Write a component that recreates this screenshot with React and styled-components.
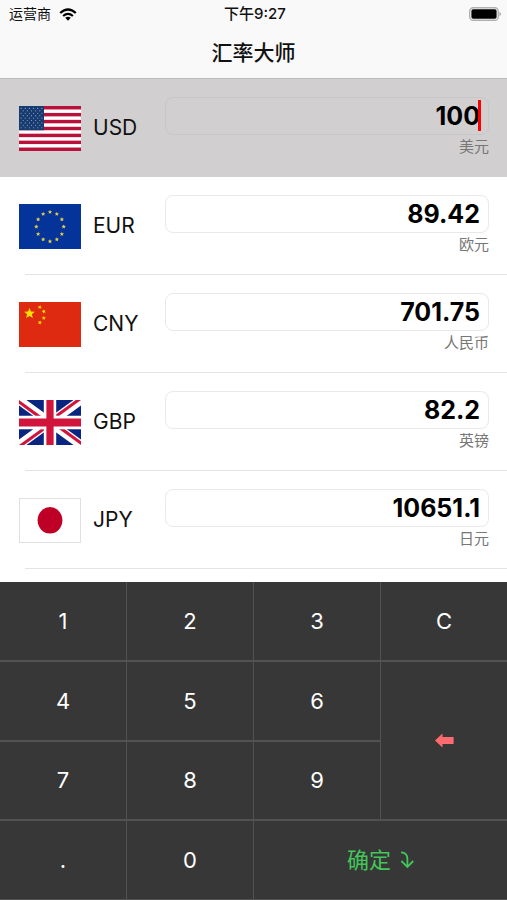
import { useState } from "react";
import styled, { createGlobalStyle } from "styled-components";

const GlobalStyle = createGlobalStyle`
  * {
    box-sizing: border-box;
  }

  body {
    margin: 0;
    background: #fff;
    color: #111;
    font-family: Inter, "Noto Sans CJK SC", sans-serif;
  }
`;

const Page = styled.div`
  min-height: 100vh;
  display: flex;
  flex-direction: column;
`;

const Header = styled.header`
  background: #f9f9f9;
  border-bottom: 1px solid #bdbcbd;
`;

const StatusBar = styled.div`
  display: grid;
  grid-template-columns: 1fr auto 1fr;
  align-items: center;
  height: 28px;
  padding: 0 6px 0 9px;
  font-size: 15px;
  line-height: 20px;
`;

const Carrier = styled.div`
  display: flex;
  align-items: center;
  gap: 8px;
  font-size: 14px;
`;

const Time = styled.div`
  font-weight: 500;
`;

const Battery = styled.svg`
  justify-self: end;
`;

const Title = styled.h1`
  margin: 0;
  height: 50px;
  font-size: 21px;
  font-weight: 500;
  line-height: 50px;
  text-align: center;
`;

const List = styled.main`
  flex: 1;
`;

const Row = styled.div`
  display: flex;
  align-items: center;
  height: 98px;
  padding: 0 18px 0 19px;
  background: ${(props) => (props.$active ? "#d1cfd0" : "#fff")};
`;

const Divider = styled.hr`
  height: 1px;
  margin: -1px 0 0 25px;
  border: 0;
  background: ${(props) => (props.$hidden ? "transparent" : "#e4e4e4")};
`;

const Flag = styled.svg`
  flex: none;
  display: block;
  width: 62px;
  height: 45px;
`;

const Code = styled.label`
  flex: none;
  width: 84px;
  padding-left: 12px;
  font-size: 21px;
  line-height: 28px;
`;

const Amount = styled.div`
  flex: 1;
  min-width: 0;
  display: flex;
  flex-direction: column;
  gap: 2px;
  padding-bottom: 2px;
`;

const Field = styled.div`
  position: relative;
`;

const AmountInput = styled.input`
  display: block;
  width: 100%;
  height: 38px;
  padding: 0 8px;
  border: 1px solid ${(props) => (props.$active ? "#c8c7c8" : "#e9e9e9")};
  border-radius: 8px;
  outline: none;
  background: transparent;
  color: #000;
  font-family: inherit;
  font-size: 25px;
  font-weight: 700;
  text-align: right;
`;

const Caret = styled.span`
  position: absolute;
  top: 3px;
  right: 8px;
  width: 3px;
  height: 31px;
  background: #f00;
`;

const CurrencyName = styled.div`
  color: #777;
  font-size: 15px;
  line-height: 20px;
  text-align: right;
`;

const Keypad = styled.div`
  display: grid;
  grid-template-columns: repeat(4, 1fr);
  grid-auto-rows: 1fr;
  gap: 2px 1px;
  height: 318px;
  border-bottom: 1px solid #525252;
  background: #525252;
`;

const Key = styled.button`
  display: flex;
  align-items: center;
  justify-content: center;
  gap: 9px;
  grid-row: span ${(props) => props.$rows || 1};
  grid-column: span ${(props) => props.$cols || 1};
  padding: 0;
  border: 0;
  background: #373737;
  color: ${(props) => props.$color || "#fff"};
  font-family: inherit;
  font-size: 22px;
  line-height: 26px;
  cursor: pointer;
`;

const starPoints = (cx, cy, r, turn = 0) =>
  Array.from({ length: 10 }, (_, i) => {
    const angle = (Math.PI * i) / 5 - Math.PI / 2 + turn;
    const radius = i % 2 ? r * 0.45 : r;
    return `${cx + radius * Math.cos(angle)},${cy + radius * Math.sin(angle)}`;
  }).join(" ");

const UsFlag = () => (
  <Flag viewBox="0 0 62 45" aria-hidden="true">
    <rect width="62" height="45" fill="#fff" />
    {[0, 2, 4, 6, 8, 10, 12].map((i) => (
      <rect key={i} y={(i * 45) / 13} width="62" height={45 / 13} fill="#b9123a" />
    ))}
    <rect width="25" height={(45 * 7) / 13} fill="#173b70" />
    {Array.from({ length: 9 }, (_, row) =>
      Array.from({ length: row % 2 ? 5 : 6 }, (_, col) => (
        <circle
          key={`${row}-${col}`}
          cx={(row % 2 ? 4.2 : 2.1) + col * 4.15}
          cy={2.4 + row * 2.42}
          r="0.6"
          fill="#8fa3c2"
        />
      ))
    )}
  </Flag>
);

const EuFlag = () => (
  <Flag viewBox="0 0 62 45" aria-hidden="true">
    <rect width="62" height="45" fill="#043399" />
    {Array.from({ length: 12 }, (_, i) => (
      <polygon
        key={i}
        fill="#e8cf45"
        points={starPoints(
          31 + 13.7 * Math.sin((i * Math.PI) / 6),
          22.7 - 14.7 * Math.cos((i * Math.PI) / 6),
          2.3
        )}
      />
    ))}
  </Flag>
);

const CnFlag = () => (
  <Flag viewBox="0 0 62 45" aria-hidden="true">
    <rect width="62" height="45" fill="#dd2a10" />
    <g fill="#ffdf00">
      <polygon points={starPoints(10.5, 11.5, 5.6)} />
      <polygon points={starPoints(20.8, 5.2, 2.2, 0.4)} />
      <polygon points={starPoints(24.8, 9.5, 2.2, 0.8)} />
      <polygon points={starPoints(24.8, 16, 2.2)} />
      <polygon points={starPoints(20.8, 20.5, 2.2, 0.4)} />
    </g>
  </Flag>
);

const GbFlag = () => (
  <Flag viewBox="0 0 60 40" preserveAspectRatio="none" aria-hidden="true">
    <rect width="60" height="40" fill="#0a2580" />
    <path d="M0 0 60 40M60 0 0 40" stroke="#fff" strokeWidth="8" />
    <g fill="#d0143c">
      <path d="M0 0 30 20H24.6L0 3.4z" />
      <path d="M60 0 30 20V16.6L55 0z" />
      <path d="M60 40 30 20H35.4L60 36.6z" />
      <path d="M0 40 30 20V23.4L5 40z" />
    </g>
    <path d="M30 0V40M0 20H60" stroke="#fff" strokeWidth="12" />
    <path d="M30 0V40M0 20H60" stroke="#d0143c" strokeWidth="7" />
  </Flag>
);

const JpFlag = () => (
  <Flag viewBox="0 0 62 45" aria-hidden="true">
    <rect x="0.5" y="0.5" width="61" height="44" fill="#fff" stroke="#e0e0e0" />
    <ellipse cx="31" cy="22.3" rx="12.4" ry="13.2" fill="#bf0026" />
  </Flag>
);

const WifiIcon = () => (
  <svg width="18" height="13" viewBox="0 0 18 13" aria-hidden="true">
    <g fill="none" stroke="#000" strokeWidth="2.3">
      <path d="M1.2 5Q9-1.9 16.8 5" />
      <path d="M4.1 8Q9 3.7 13.9 8" />
    </g>
    <path d="M6.2 9.8Q9 7.6 11.8 9.8L9 12.8z" />
  </svg>
);

const BatteryIcon = () => (
  <Battery width="32" height="14" viewBox="0 0 32 14" aria-hidden="true">
    <rect x="0.7" y="0.7" width="28.6" height="12.6" rx="3.6" fill="none" stroke="#b0b0b0" strokeWidth="1.4" />
    <rect x="2.4" y="2.2" width="25.2" height="9.6" rx="1.8" />
    <path d="M30.5 4.8Q32 5.6 32 7T30.5 9.2z" fill="#a5a5a5" />
  </Battery>
);

const BackspaceIcon = () => (
  <svg width="19" height="15" viewBox="0 0 19 15" aria-hidden="true">
    <path d="M0 7.5 7.5 0.5V4H18.6V11H7.5V14.5z" fill="#ff6b6e" />
  </svg>
);

const ConfirmIcon = () => (
  <svg width="14" height="18" viewBox="0 0 14 18" fill="none" stroke="#42c65a" strokeWidth="1.8" aria-hidden="true">
    <path d="M1 1.4Q7.4 1.6 7.4 8V15.6" />
    <path d="M1.4 10 7.4 16 13.2 10" />
  </svg>
);

const currencies = [
  { code: "USD", name: "美元", rate: 1, FlagIcon: UsFlag },
  { code: "EUR", name: "欧元", rate: 0.8942, FlagIcon: EuFlag },
  { code: "CNY", name: "人民币", rate: 7.0175, FlagIcon: CnFlag },
  { code: "GBP", name: "英镑", rate: 0.822, FlagIcon: GbFlag },
  { code: "JPY", name: "日元", rate: 106.511, FlagIcon: JpFlag },
];

const convert = (amount, from, to) =>
  String(Math.round(((Number(amount) || 0) / from) * to * 100) / 100);

const CurrencyRow = ({ currency, active, value, onSelect }) => {
  const { code, name, FlagIcon } = currency;

  return (
    <>
      <Row $active={active} onClick={onSelect}>
        <FlagIcon />
        <Code htmlFor={code}>{code}</Code>
        <Amount>
          <Field>
            <AmountInput id={code} $active={active} value={value} onFocus={onSelect} readOnly />
            {active && <Caret />}
          </Field>
          <CurrencyName>{name}</CurrencyName>
        </Amount>
      </Row>
      <Divider $hidden={active} />
    </>
  );
};

const App = () => {
  const [selected, setSelected] = useState(currencies[0]);
  const [amount, setAmount] = useState("100");

  const valueOf = (currency) =>
    currency === selected ? amount : convert(amount, selected.rate, currency.rate);

  const select = (currency) => {
    setAmount(valueOf(currency));
    setSelected(currency);
  };

  const press = (char) => {
    if (char === "." && amount.includes(".")) return;
    setAmount(amount === "0" && char !== "." ? char : amount + char);
  };

  const digit = (char) => (
    <Key key={char} type="button" onClick={() => press(char)}>
      {char}
    </Key>
  );

  return (
    <Page>
      <GlobalStyle />
      <Header>
        <StatusBar>
          <Carrier>
            运营商
            <WifiIcon />
          </Carrier>
          <Time>下午9:27</Time>
          <BatteryIcon />
        </StatusBar>
        <Title>汇率大师</Title>
      </Header>
      <List>
        {currencies.map((currency) => (
          <CurrencyRow
            key={currency.code}
            currency={currency}
            active={currency === selected}
            value={valueOf(currency)}
            onSelect={() => select(currency)}
          />
        ))}
      </List>
      <Keypad>
        {["1", "2", "3"].map(digit)}
        <Key type="button" onClick={() => setAmount("0")}>
          C
        </Key>
        {["4", "5", "6"].map(digit)}
        <Key type="button" aria-label="删除" $rows={2} onClick={() => setAmount(amount.slice(0, -1) || "0")}>
          <BackspaceIcon />
        </Key>
        {["7", "8", "9", ".", "0"].map(digit)}
        <Key type="button" $cols={2} $color="#42c65a">
          确定
          <ConfirmIcon />
        </Key>
      </Keypad>
    </Page>
  );
};

export default App;
